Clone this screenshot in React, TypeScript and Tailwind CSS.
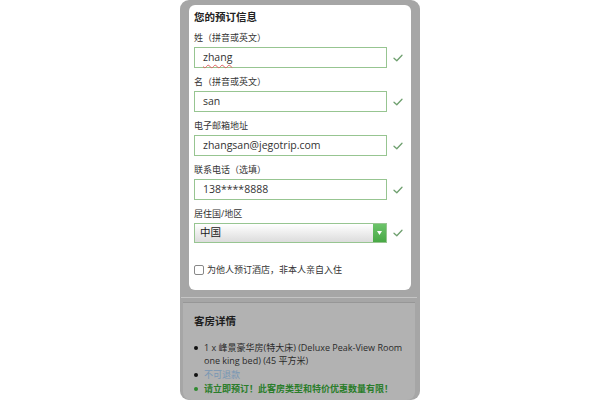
import React from "react";

interface Field {
  label: string;
  value: string;
  spell?: boolean;
}

const fields: Field[] = [
  { label: "姓（拼音或英文）", value: "zhang", spell: true },
  { label: "名（拼音或英文）", value: "san" },
  { label: "电子邮箱地址", value: "zhangsan@jegotrip.com" },
  { label: "联系电话（选填）", value: "138****8888" },
];

const font = "font-['Open_Sans','Noto_Sans_CJK_SC',sans-serif]";

const Check: React.FC = () => (
  <svg width="10" height="8" viewBox="0 0 10 8" className="shrink-0">
    <path d="M1 4.2L3.8 6.8L9 1.2" fill="none" stroke="#6fa06f" strokeWidth="1.3" strokeLinecap="round" strokeLinejoin="round" />
  </svg>
);

const Bullet: React.FC<{ color: string; children: React.ReactNode }> = ({ color, children }) => (
  <li className="flex">
    <span className="w-[10px] shrink-0 pt-[5px]">
      <span className={`block h-[4px] w-[4px] rounded-full ${color}`} />
    </span>
    <span>{children}</span>
  </li>
);

export default function App() {
  return (
    <div className={`flex h-[400px] w-[600px] justify-center overflow-hidden bg-white ${font}`}>
      <div className="flex h-[400px] w-[240px] flex-col rounded-[9px] bg-[#a6a6a6]">
        {/* booking form card */}
        <div className="ml-[9px] mr-[9px] mt-[5px] h-[285px] shrink-0 rounded-[6px] bg-white pl-[5px] pr-[8px] pt-[5px]">
          <h2 className="text-[10.5px] font-bold leading-[15px] text-[#222]">您的预订信息</h2>
          <div className="mt-[6px] flex flex-col">
            {fields.map((f) => (
              <div key={f.label} className="mb-[7px]">
                <div className="text-[9px] leading-[13px] text-[#333]">{f.label}</div>
                <div className="mt-[3px] flex items-center gap-[6px]">
                  <div className="flex h-[21px] w-[194px] items-center border border-[#97c591] pl-[8px] text-[10.5px] text-[#333]">
                    {f.spell ? (
                      <span className="underline decoration-[#e06060] decoration-wavy decoration-1 underline-offset-[3px]">
                        {f.value}
                      </span>
                    ) : (
                      f.value
                    )}
                  </div>
                  <Check />
                </div>
              </div>
            ))}
            <div>
              <div className="text-[9px] leading-[13px] text-[#333]">居住国/地区</div>
              <div className="mt-[3px] flex items-center gap-[6px]">
                <div className="flex h-[20px] w-[194px] items-center border border-[#97c591] bg-gradient-to-b from-white to-[#dcdcdc]">
                  <span className="flex-1 pl-[5px] text-[10.5px] text-[#222]">中国</span>
                  <span className="flex h-full w-[13px] items-center justify-center bg-gradient-to-b from-[#6cc46a] to-[#48a845]">
                    <svg width="5" height="4" viewBox="0 0 5 4">
                      <path d="M0 0H5L2.5 4Z" fill="#fff" />
                    </svg>
                  </span>
                </div>
                <Check />
              </div>
            </div>
            <label className="mt-[21px] flex items-center gap-[3px] text-[9px] leading-[12px] text-[#333]">
              <span className="h-[10px] w-[10px] rounded-[2px] border border-[#888] bg-white" />
              为他人预订酒店，非本人亲自入住
            </label>
          </div>
        </div>

        {/* room details, dimmed */}
        <div className="mt-[7px] ml-[1px] mr-[3px] shrink-0 border-t border-[#c4c4c4]" />
        <div className="mt-[4px] ml-[3px] mr-[5px] min-h-0 flex-1 overflow-hidden rounded-b-[8px] border-t border-[#979797] bg-[#b2b2b2] pl-[11px] pt-[10px]">
          <h3 className="text-[10.5px] font-bold leading-[16px] text-[#1e1e1e]">客房详情</h3>
          <ul className="mt-[12px] flex flex-col gap-[1px] text-[9px] leading-[13px] text-[#2a2a2a]">
            <Bullet color="bg-[#111]">
              <span className="whitespace-nowrap">1 x 峰景豪华房(特大床) (Deluxe Peak-View Room</span>
              <br />
              one king bed) (45 平方米)
            </Bullet>
            <Bullet color="bg-[#111]">
              <span className="text-[#7796b4]">不可退款</span>
            </Bullet>
            <Bullet color="bg-[#2f8a2f]">
              <span className="whitespace-nowrap font-bold text-[#2a7d2a]">请立即预订！此客房类型和特价优惠数量有限！</span>
            </Bullet>
          </ul>
        </div>
      </div>
    </div>
  );
}
